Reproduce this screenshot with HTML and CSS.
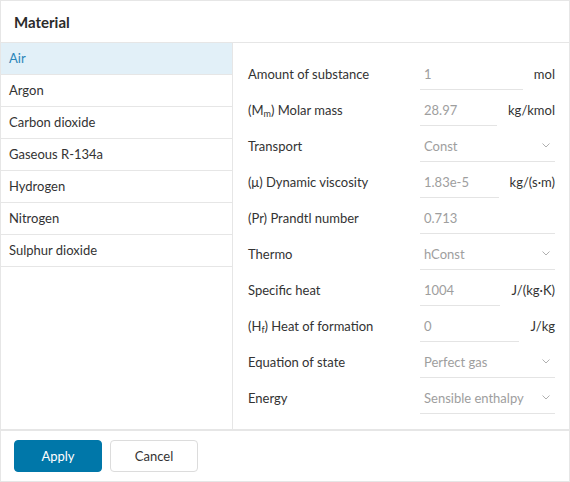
FILE: index.html
```html
<!DOCTYPE html>
<html>
<head>
<meta charset="utf-8">
<link rel="stylesheet" href="styles.css">
</head>
<body>
<div class="dialog">
  <div class="header">Material</div>
  <div class="body">
    <ul class="list">
      <li class="item selected">Air</li>
      <li class="item">Argon</li>
      <li class="item">Carbon dioxide</li>
      <li class="item">Gaseous R-134a</li>
      <li class="item">Hydrogen</li>
      <li class="item">Nitrogen</li>
      <li class="item">Sulphur dioxide</li>
    </ul>
    <div class="form">
      <div class="row">
        <div class="label">Amount of substance</div>
        <div class="field"><div class="input">1</div><div class="unit">mol</div></div>
      </div>
      <div class="row">
        <div class="label">(M<sub>m</sub>) Molar mass</div>
        <div class="field"><div class="input">28.97</div><div class="unit">kg/kmol</div></div>
      </div>
      <div class="row">
        <div class="label">Transport</div>
        <div class="field"><div class="input select">Const<svg class="chev" viewBox="0 0 8 5" width="8" height="5"><path d="M0.5 0.5 L4 4 L7.5 0.5" fill="none" stroke="#b0b0b0" stroke-width="1"/></svg></div></div>
      </div>
      <div class="row">
        <div class="label">(μ) Dynamic viscosity</div>
        <div class="field"><div class="input">1.83e-5</div><div class="unit">kg/(s·m)</div></div>
      </div>
      <div class="row">
        <div class="label">(Pr) Prandtl number</div>
        <div class="field"><div class="input">0.713</div></div>
      </div>
      <div class="row">
        <div class="label">Thermo</div>
        <div class="field"><div class="input select">hConst<svg class="chev" viewBox="0 0 8 5" width="8" height="5"><path d="M0.5 0.5 L4 4 L7.5 0.5" fill="none" stroke="#b0b0b0" stroke-width="1"/></svg></div></div>
      </div>
      <div class="row">
        <div class="label">Specific heat</div>
        <div class="field"><div class="input">1004</div><div class="unit">J/(kg·K)</div></div>
      </div>
      <div class="row">
        <div class="label">(H<sub>f</sub>) Heat of formation</div>
        <div class="field"><div class="input">0</div><div class="unit">J/kg</div></div>
      </div>
      <div class="row">
        <div class="label">Equation of state</div>
        <div class="field"><div class="input select">Perfect gas<svg class="chev" viewBox="0 0 8 5" width="8" height="5"><path d="M0.5 0.5 L4 4 L7.5 0.5" fill="none" stroke="#b0b0b0" stroke-width="1"/></svg></div></div>
      </div>
      <div class="row">
        <div class="label">Energy</div>
        <div class="field"><div class="input select">Sensible enthalpy<svg class="chev" viewBox="0 0 8 5" width="8" height="5"><path d="M0.5 0.5 L4 4 L7.5 0.5" fill="none" stroke="#b0b0b0" stroke-width="1"/></svg></div></div>
      </div>
    </div>
  </div>
  <div class="footer">
    <button class="btn primary">Apply</button>
    <button class="btn secondary">Cancel</button>
  </div>
</div>
</body>
</html>
```

FILE: styles.css
```css
* { box-sizing: border-box; }
html, body { margin: 0; padding: 0; background: #fff; }
body { font-family: Lato, "Open Sans", sans-serif; color: #333; font-size: 13px; }

.dialog {
  width: 570px;
  height: 482px;
  border: 1px solid #e6e6e6;
  display: flex;
  flex-direction: column;
}

.header {
  height: 42px;
  border-bottom: 1px solid #e6e6e6;
  font-weight: bold;
  font-size: 15px;
  padding-left: 13px;
  display: flex;
  align-items: center;
  color: #2b2b2b;
}

.body {
  display: flex;
  height: 388px;
  border-bottom: 2px solid #e6e6e6;
}

.list {
  list-style: none;
  margin: 0;
  padding: 0;
  width: 232px;
  border-right: 1px solid #e6e6e6;
}

.item {
  height: 32px;
  border-bottom: 1px solid #e6e6e6;
  padding-left: 8px;
  padding-bottom: 2px;
  display: flex;
  align-items: center;
  color: #333;
}

.item.selected {
  background: #e2f0f8;
  color: #2a85b9;
}

.form {
  flex: 1;
  padding: 16px 14px 0 15px;
}

.row {
  display: flex;
  align-items: center;
  height: 31px;
  margin-bottom: 5px;
}

.label {
  width: 172px;
  flex: none;
  color: #333;
  padding-bottom: 2px;
}

.label sub {
  font-size: 9px;
  vertical-align: -2px;
  line-height: 0;
}

.field {
  flex: 1;
  display: flex;
  align-items: center;
  gap: 11px;
  height: 31px;
}

.input {
  flex: 1;
  height: 31px;
  border-bottom: 1px solid #e4e4e4;
  padding-left: 4px;
  padding-bottom: 1px;
  display: flex;
  align-items: center;
  color: #9e9e9e;
}

.select { justify-content: space-between; padding-right: 5px; }

.chev { display: block; }

.unit {
  flex: none;
  color: #333;
  text-align: right;
  height: 31px;
  padding-bottom: 2px;
  display: flex;
  align-items: center;
}

.footer {
  flex: 1;
  display: flex;
  gap: 8px;
  padding: 9px 13px;
}

.btn {
  width: 88px;
  height: 32px;
  border-radius: 4px;
  font-family: Lato, "Open Sans", sans-serif;
  font-size: 13px;
  cursor: pointer;
}

.primary {
  background: #0077a9;
  color: #fff;
  border: 1px solid #0077a9;
}

.secondary {
  background: #fff;
  color: #333;
  border: 1px solid #dcdcdc;
}
```
